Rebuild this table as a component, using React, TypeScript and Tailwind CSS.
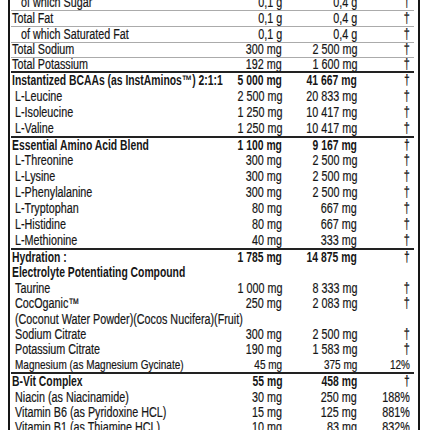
import React from "react";

type Row = {
  label: string;
  a?: string;
  b?: string;
  c?: string;
  bold?: boolean;
  indent?: "none" | "sub" | "deep";
  line?: "gray" | "thick";
  h: string;
  small?: boolean;
};

const ROWS: Row[] = [
  { label: "of which Sugar", a: "0,1 g", b: "0,4 g", c: "†", indent: "deep", line: "gray", h: "h-[16px]" },
  { label: "Total Fat", a: "0,1 g", b: "0,4 g", c: "†", line: "gray", h: "h-[16px]" },
  { label: "of which Saturated Fat", a: "0,1 g", b: "0,4 g", c: "†", indent: "deep", line: "gray", h: "h-[16px]" },
  { label: "Total Sodium", a: "300 mg", b: "2 500 mg", c: "†", line: "gray", h: "h-[15px]" },
  { label: "Total Potassium", a: "192 mg", b: "1 600 mg", c: "†", line: "thick", h: "h-[15px]" },
  { label: "Instantized BCAAs (as InstAminos™) 2:1:1", a: "5 000 mg", b: "41 667 mg", c: "†", bold: true, h: "h-[16px]" },
  { label: "L-Leucine", a: "2 500 mg", b: "20 833 mg", c: "†", indent: "sub", h: "h-[16px]" },
  { label: "L-Isoleucine", a: "1 250 mg", b: "10 417 mg", c: "†", indent: "sub", h: "h-[16px]" },
  { label: "L-Valine", a: "1 250 mg", b: "10 417 mg", c: "†", indent: "sub", line: "thick", h: "h-[17px]" },
  { label: "Essential Amino Acid Blend", a: "1 100 mg", b: "9 167 mg", c: "†", bold: true, h: "h-[15px]" },
  { label: "L-Threonine", a: "300 mg", b: "2 500 mg", c: "†", indent: "sub", h: "h-[16px]" },
  { label: "L-Lysine", a: "300 mg", b: "2 500 mg", c: "†", indent: "sub", h: "h-[16px]" },
  { label: "L-Phenylalanine", a: "300 mg", b: "2 500 mg", c: "†", indent: "sub", h: "h-[16px]" },
  { label: "L-Tryptophan", a: "80 mg", b: "667 mg", c: "†", indent: "sub", h: "h-[16px]" },
  { label: "L-Histidine", a: "80 mg", b: "667 mg", c: "†", indent: "sub", h: "h-[16px]" },
  { label: "L-Methionine", a: "40 mg", b: "333 mg", c: "†", indent: "sub", line: "thick", h: "h-[17px]" },
  { label: "Hydration :", a: "1 785 mg", b: "14 875 mg", c: "†", bold: true, h: "h-[15px]" },
  { label: "Electrolyte Potentiating Compound", bold: true, h: "h-[16px]" },
  { label: "Taurine", a: "1 000 mg", b: "8 333 mg", c: "†", indent: "sub", h: "h-[15px]" },
  { label: "CocOganic™", a: "250 mg", b: "2 083 mg", c: "†", indent: "sub", h: "h-[16px]" },
  { label: "(Coconut Water Powder)(Cocos Nucifera)(Fruit)", indent: "sub", h: "h-[15px]" },
  { label: "Sodium Citrate", a: "300 mg", b: "2 500 mg", c: "†", indent: "sub", h: "h-[15px]" },
  { label: "Potassium Citrate", a: "190 mg", b: "1 583 mg", c: "†", indent: "sub", h: "h-[15px]" },
  { label: "Magnesium (as Magnesium Gycinate)", a: "45 mg", b: "375 mg", c: "12%", indent: "sub", small: true, line: "thick", h: "h-[17px]" },
  { label: "B-Vit Complex", a: "55 mg", b: "458 mg", c: "†", bold: true, h: "h-[16px]" },
  { label: "Niacin (as Niacinamide)", a: "30 mg", b: "250 mg", c: "188%", indent: "sub", h: "h-[15px]" },
  { label: "Vitamin B6 (as Pyridoxine HCL)", a: "15 mg", b: "125 mg", c: "881%", indent: "sub", h: "h-[15px]" },
  { label: "Vitamin B1 (as Thiamine HCL)", a: "10 mg", b: "83 mg", c: "832%", indent: "sub", h: "h-[15px]" },
];

// condensed look: Arial-metric face squeezed horizontally
function Cell({ text, right, bold }: { text?: string; right?: boolean; bold?: boolean }) {
  if (!text) return null;
  return (
    <span
      className={`inline-block ${bold ? "scale-x-[0.74]" : "scale-x-[0.77]"} ${
        right ? "origin-right" : "origin-left"
      }`}
    >
      {text}
    </span>
  );
}

function NutrientRow({ row }: { row: Row }) {
  const indent =
    row.indent === "deep" ? "pl-[10px]" : row.indent === "sub" ? "pl-[4px]" : "pl-[1px]";
  const line =
    row.line === "gray"
      ? "border-b border-[#ababab]"
      : row.line === "thick"
      ? "border-b-2 border-[#222]"
      : "";
  return (
    <div
      className={`flex items-center pb-[1px] ${row.h} ${line} ${
        row.small ? "text-[13px]" : "text-[14px]"
      } leading-[15px] whitespace-nowrap ${
        row.bold ? "font-bold" : "font-normal [-webkit-text-stroke:0.2px_#161616]"
      }`}
    >
      <div className={`flex-1 min-w-0 ${indent}`}>
        <Cell text={row.label} bold={row.bold} />
      </div>
      <div className="w-[70px] text-right">
        <Cell text={row.a} right bold={row.bold} />
      </div>
      <div className="w-[75px] text-right">
        <Cell text={row.b} right bold={row.bold} />
      </div>
      <div className="w-[57px] pr-[4px] text-right">
        <Cell text={row.c} right bold={row.bold} />
      </div>
    </div>
  );
}

export default function App() {
  return (
    <div className="w-[430px] h-[430px] overflow-hidden bg-white text-[#161616] font-['Liberation_Sans',Arial,sans-serif]">
      <div className="ml-[8px] w-[412px] mt-[-5px] border-l-2 border-r-2 border-[#161616] pl-[1px] pr-[4px] pb-[20px]">
        {ROWS.map((row) => (
          <NutrientRow key={row.label} row={row} />
        ))}
      </div>
    </div>
  );
}
